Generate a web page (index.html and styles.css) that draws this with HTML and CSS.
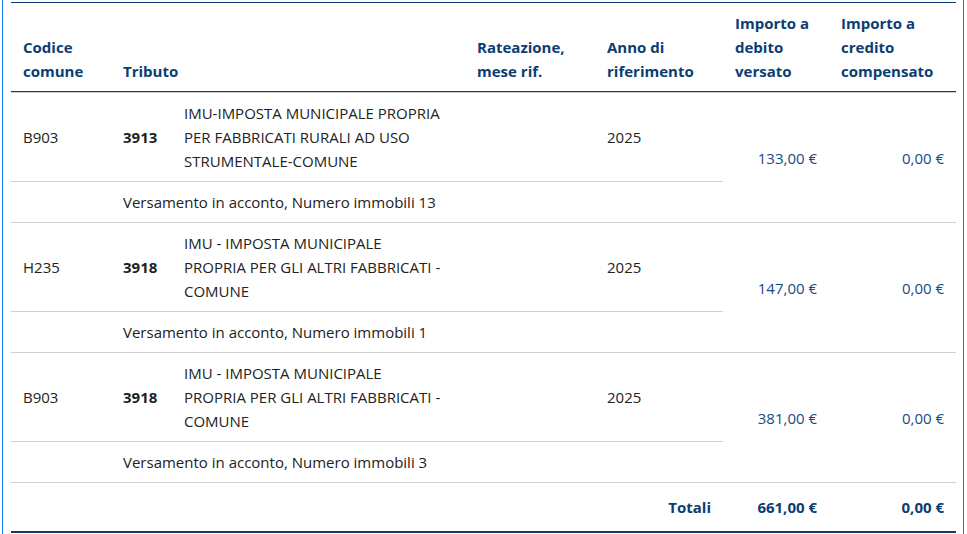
FILE: index.html
```html
<!DOCTYPE html>
<html lang="it">
<head>
<meta charset="utf-8">
<link rel="stylesheet" href="styles.css">
</head>
<body>
<div class="frame">
<table class="f24">
  <colgroup>
    <col class="c-com"><col class="c-cod"><col class="c-desc"><col class="c-rat"><col class="c-anno"><col class="c-deb"><col class="c-cred">
  </colgroup>
  <thead>
    <tr>
      <th>Codice comune</th>
      <th colspan="2">Tributo</th>
      <th>Rateazione, mese rif.</th>
      <th>Anno di riferimento</th>
      <th>Importo a debito versato</th>
      <th>Importo a credito compensato</th>
    </tr>
  </thead>
  <tbody>
    <tr class="main first">
      <td>B903</td>
      <td class="code">3913</td>
      <td class="desc">IMU-IMPOSTA MUNICIPALE PROPRIA PER FABBRICATI RURALI AD USO STRUMENTALE-COMUNE</td>
      <td></td>
      <td>2025</td>
      <td class="amt" rowspan="2">133,00 €</td>
      <td class="amt" rowspan="2">0,00 €</td>
    </tr>
    <tr class="sub">
      <td></td>
      <td colspan="4">Versamento in acconto, Numero immobili 13</td>
    </tr>
    <tr class="main">
      <td>H235</td>
      <td class="code">3918</td>
      <td class="desc">IMU - IMPOSTA MUNICIPALE PROPRIA PER GLI ALTRI FABBRICATI - COMUNE</td>
      <td></td>
      <td>2025</td>
      <td class="amt" rowspan="2">147,00 €</td>
      <td class="amt" rowspan="2">0,00 €</td>
    </tr>
    <tr class="sub">
      <td></td>
      <td colspan="4">Versamento in acconto, Numero immobili 1</td>
    </tr>
    <tr class="main">
      <td>B903</td>
      <td class="code">3918</td>
      <td class="desc">IMU - IMPOSTA MUNICIPALE PROPRIA PER GLI ALTRI FABBRICATI - COMUNE</td>
      <td></td>
      <td>2025</td>
      <td class="amt" rowspan="2">381,00 €</td>
      <td class="amt" rowspan="2">0,00 €</td>
    </tr>
    <tr class="sub">
      <td></td>
      <td colspan="4">Versamento in acconto, Numero immobili 3</td>
    </tr>
  </tbody>
  <tfoot>
    <tr>
      <td colspan="5" class="tot-label">Totali</td>
      <td class="tot">661,00 €</td>
      <td class="tot">0,00 €</td>
    </tr>
  </tfoot>
</table>
</div>
</body>
</html>
```
FILE: styles.css
```css
html, body {
  margin: 0;
  padding: 0;
  background: #fff;
}
body {
  font-family: "Open Sans", "Noto Sans", sans-serif;
  font-size: 15px;
  color: #222;
}
.frame {
  margin-left: 2px;
  width: 962px;
  height: 534px;
  box-sizing: border-box;
  border-left: 1px solid #1a7ef0;
  border-right: 1px solid #1a7ef0;
  padding: 2px 7px 0 8px;
}
table.f24 {
  width: 945px;
  border-collapse: separate;
  border-spacing: 0;
  table-layout: fixed;
  border-top: 1px solid #0b3d73;
  border-bottom: 2px solid #0b3d73;
}
.c-com { width: 100px; }
.c-cod { width: 61px; }
.c-desc { width: 293px; }
.c-rat { width: 130px; }
.c-anno { width: 128px; }
.c-deb { width: 106px; }
.c-cred { width: 127px; }
th, td {
  padding: 8px 12px;
  line-height: 24px;
  text-align: left;
}
th {
  vertical-align: bottom;
  font-weight: 700;
  color: #0b3d73;
  border-bottom: 1px solid #0b3d73;
}
td {
  vertical-align: middle;
  border-bottom: 1px solid #d0d0d0;
}
tr.first td {
  border-top: 1px solid #c9d3de;
}
td.desc {
  padding-right: 18px;
}
.code {
  font-weight: 700;
  color: #1e1e1e;
}
.amt {
  text-align: right;
  color: #174a85;
}
tfoot td {
  border-bottom: none;
  padding-top: 12px;
  padding-bottom: 12px;
  font-weight: 700;
  color: #0b3d73;
  text-align: right;
}
```
